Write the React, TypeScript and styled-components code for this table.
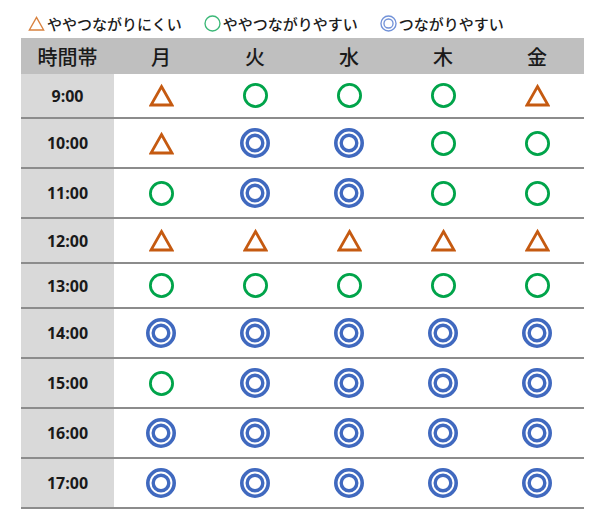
import React from "react";
import styled, { createGlobalStyle } from "styled-components";

type Mark = "T" | "C" | "D";

const DAYS = ["月", "火", "水", "木", "金"];

const ROWS: { time: string; marks: Mark[] }[] = [
  { time: "9:00", marks: ["T", "C", "C", "C", "T"] },
  { time: "10:00", marks: ["T", "D", "D", "C", "C"] },
  { time: "11:00", marks: ["C", "D", "D", "C", "C"] },
  { time: "12:00", marks: ["T", "T", "T", "T", "T"] },
  { time: "13:00", marks: ["C", "C", "C", "C", "C"] },
  { time: "14:00", marks: ["D", "D", "D", "D", "D"] },
  { time: "15:00", marks: ["C", "D", "D", "D", "D"] },
  { time: "16:00", marks: ["D", "D", "D", "D", "D"] },
  { time: "17:00", marks: ["D", "D", "D", "D", "D"] },
];

const ORANGE = "#c55a11";
const GREEN = "#00a44a";
const BLUE = "#4069bf";

// the marks in the table are drawn bold, the ones in the legend thin and lighter
const MarkIcon = ({ type, small }: { type: Mark; small?: boolean }) => {
  if (type === "T") {
    const s = small ? 17 : 25;
    return (
      <svg width={s} height={s} viewBox="0 0 25 25">
        <polygon
          points="12.5,3.5 23,22 2,22"
          fill="none"
          stroke={small ? "#d9823f" : ORANGE}
          strokeWidth={small ? 2 : 2.8}
        />
      </svg>
    );
  }
  if (type === "C") {
    const s = small ? 17 : 25;
    return (
      <svg width={s} height={s} viewBox="0 0 25 25">
        <circle
          cx="12.5"
          cy="12.5"
          r={small ? 11 : 11.1}
          fill="none"
          stroke={small ? "#3cb878" : GREEN}
          strokeWidth={small ? 2 : 2.8}
        />
      </svg>
    );
  }
  const s = small ? 17 : 30;
  return (
    <svg width={s} height={s} viewBox="0 0 30 30">
      <circle
        cx="15"
        cy="15"
        r={small ? 13.3 : 13.2}
        fill="none"
        stroke={small ? "#7292d8" : BLUE}
        strokeWidth={small ? 2.4 : 3.6}
      />
      <circle
        cx="15"
        cy="15"
        r={small ? 8 : 7.8}
        fill="none"
        stroke={small ? "#7292d8" : BLUE}
        strokeWidth={small ? 2.4 : 3.4}
      />
    </svg>
  );
};

const App = () => {
  return (
    <>
      <GlobalStyle />
      <Page>
        <Legend>
          <LegendItem>
            <MarkIcon type="T" small />
            <span>ややつながりにくい</span>
          </LegendItem>
          <LegendItem>
            <MarkIcon type="C" small />
            <span>ややつながりやすい</span>
          </LegendItem>
          <LegendItem>
            <MarkIcon type="D" small />
            <span>つながりやすい</span>
          </LegendItem>
        </Legend>

        <Table>
          <HeaderRow>
            <HeaderCell>時間帯</HeaderCell>
            {DAYS.map((d) => (
              <HeaderCell key={d}>{d}</HeaderCell>
            ))}
          </HeaderRow>
          {ROWS.map((row) => (
            <Row key={row.time}>
              <TimeCell>{row.time}</TimeCell>
              {row.marks.map((m, i) => (
                <MarkCell key={i}>
                  <MarkIcon type={m} />
                </MarkCell>
              ))}
            </Row>
          ))}
        </Table>
      </Page>
    </>
  );
};
export default App;

const GlobalStyle = createGlobalStyle`
  body {
    margin: 0;
    background: #ffffff;
    font-family: "Noto Sans CJK JP", "Noto Sans", sans-serif;
    color: #1c1c1c;
  }
`;

const Page = styled.div`
  width: 605px;
  height: 524px;
  overflow: hidden;
`;

const Legend = styled.div`
  display: flex;
  align-items: center;
  gap: 22px;
  height: 38px;
  padding: 9px 0 0 28px;
  box-sizing: border-box;
  font-size: 15px;
  font-weight: 500;
  line-height: 18px;
`;

const LegendItem = styled.div`
  display: flex;
  align-items: center;
  gap: 2px;

  svg {
    display: block;
  }
`;

const Table = styled.div`
  margin-left: 21px;
  width: 563px;
`;

const HeaderRow = styled.div`
  display: grid;
  grid-template-columns: 93px repeat(5, 94px);
  height: 36px;
  background: #bfbfbf;
`;

const HeaderCell = styled.div`
  display: flex;
  align-items: center;
  justify-content: center;
  font-size: 20px;
  font-weight: 500;
  color: #1a1a1a;
`;

const Row = styled.div`
  display: grid;
  grid-template-columns: 93px repeat(5, 94px);
  border-bottom: 2px solid #8c8c8c;
`;

const TimeCell = styled.div`
  display: flex;
  align-items: center;
  justify-content: center;
  background: #d9d9d9;
  font-family: "Open Sans", "Noto Sans", sans-serif;
  font-weight: 700;
  font-size: 16px;
  color: #1a1a1a;
`;

const MarkCell = styled.div`
  display: flex;
  align-items: center;
  justify-content: center;
  padding: 9px 0;

  svg {
    display: block;
  }
`;
